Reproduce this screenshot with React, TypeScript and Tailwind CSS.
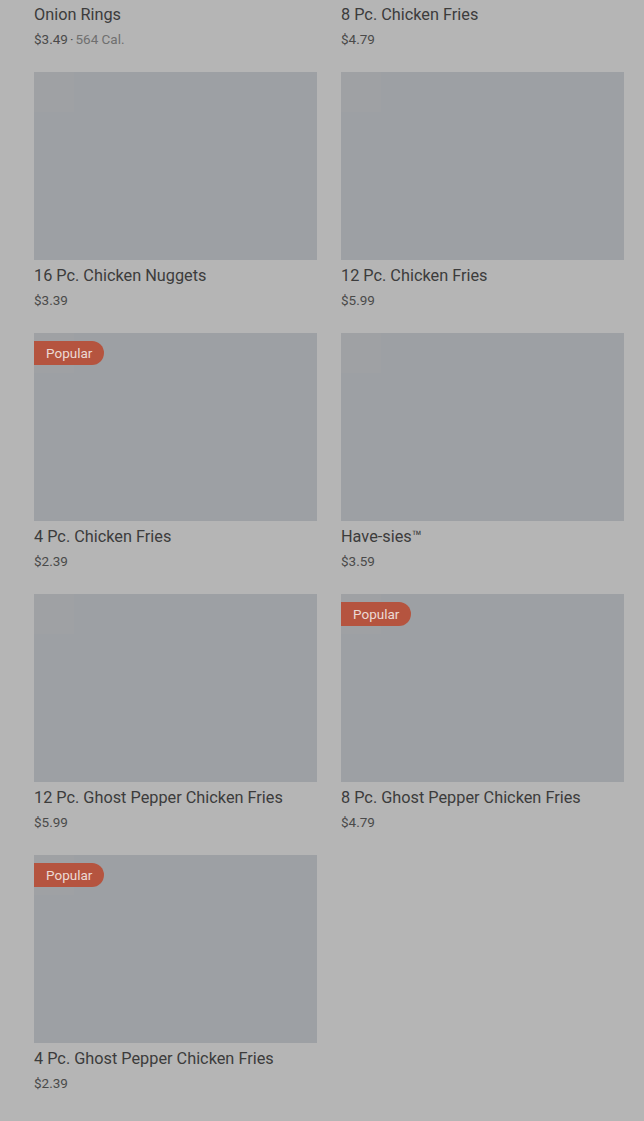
import React from "react";

type Item = { name: string; price: string; cal?: string; popular?: boolean };

const items: Item[] = [
  { name: "Onion Rings", price: "$3.49", cal: "564 Cal." },
  { name: "8 Pc. Chicken Fries", price: "$4.79" },
  { name: "16 Pc. Chicken Nuggets", price: "$3.39" },
  { name: "12 Pc. Chicken Fries", price: "$5.99" },
  { name: "4 Pc. Chicken Fries", price: "$2.39", popular: true },
  { name: "Have-sies™", price: "$3.59" },
  { name: "12 Pc. Ghost Pepper Chicken Fries", price: "$5.99" },
  { name: "8 Pc. Ghost Pepper Chicken Fries", price: "$4.79", popular: true },
  { name: "4 Pc. Ghost Pepper Chicken Fries", price: "$2.39", popular: true },
];

function Card({ item }: { item: Item }) {
  return (
    <div className="flex flex-col">
      <div className="relative h-[188px] bg-[#9da0a4]">
        <div className="absolute left-0 top-0 h-[40px] w-[40px] bg-[#9fa1a4]" />
        {item.popular && (
          <div className="absolute left-0 top-[8px] flex h-[24px] items-center rounded-r-full bg-[#b5543f] pl-[12px] pr-[12px] text-[13.5px] text-[#ecd9d4]">
            Popular
          </div>
        )}
      </div>
      <div className="pt-[6px] text-[16.3px] leading-5 text-[#3c3c3c]">{item.name}</div>
      <div className="mt-[4px] text-[13.5px] leading-5 text-[#4a4a4a]">
        {item.price}
        {item.cal && (
          <>
            <span className="mx-[2px]">·</span>
            <span className="text-[#6f6f6f]">{item.cal}</span>
          </>
        )}
      </div>
    </div>
  );
}

export default function App() {
  return (
    <div
      className="min-h-[1121px] w-[644px] overflow-hidden bg-[#b5b5b5]"
      style={{ fontFamily: "Roboto, 'Noto Sans', sans-serif" }}
    >
      <div className="mt-[-189px] grid grid-cols-2 gap-x-[24px] gap-y-[23px] pl-[34px] pr-[20px]">
        {items.map((it) => (
          <Card key={it.name} item={it} />
        ))}
      </div>
    </div>
  );
}
